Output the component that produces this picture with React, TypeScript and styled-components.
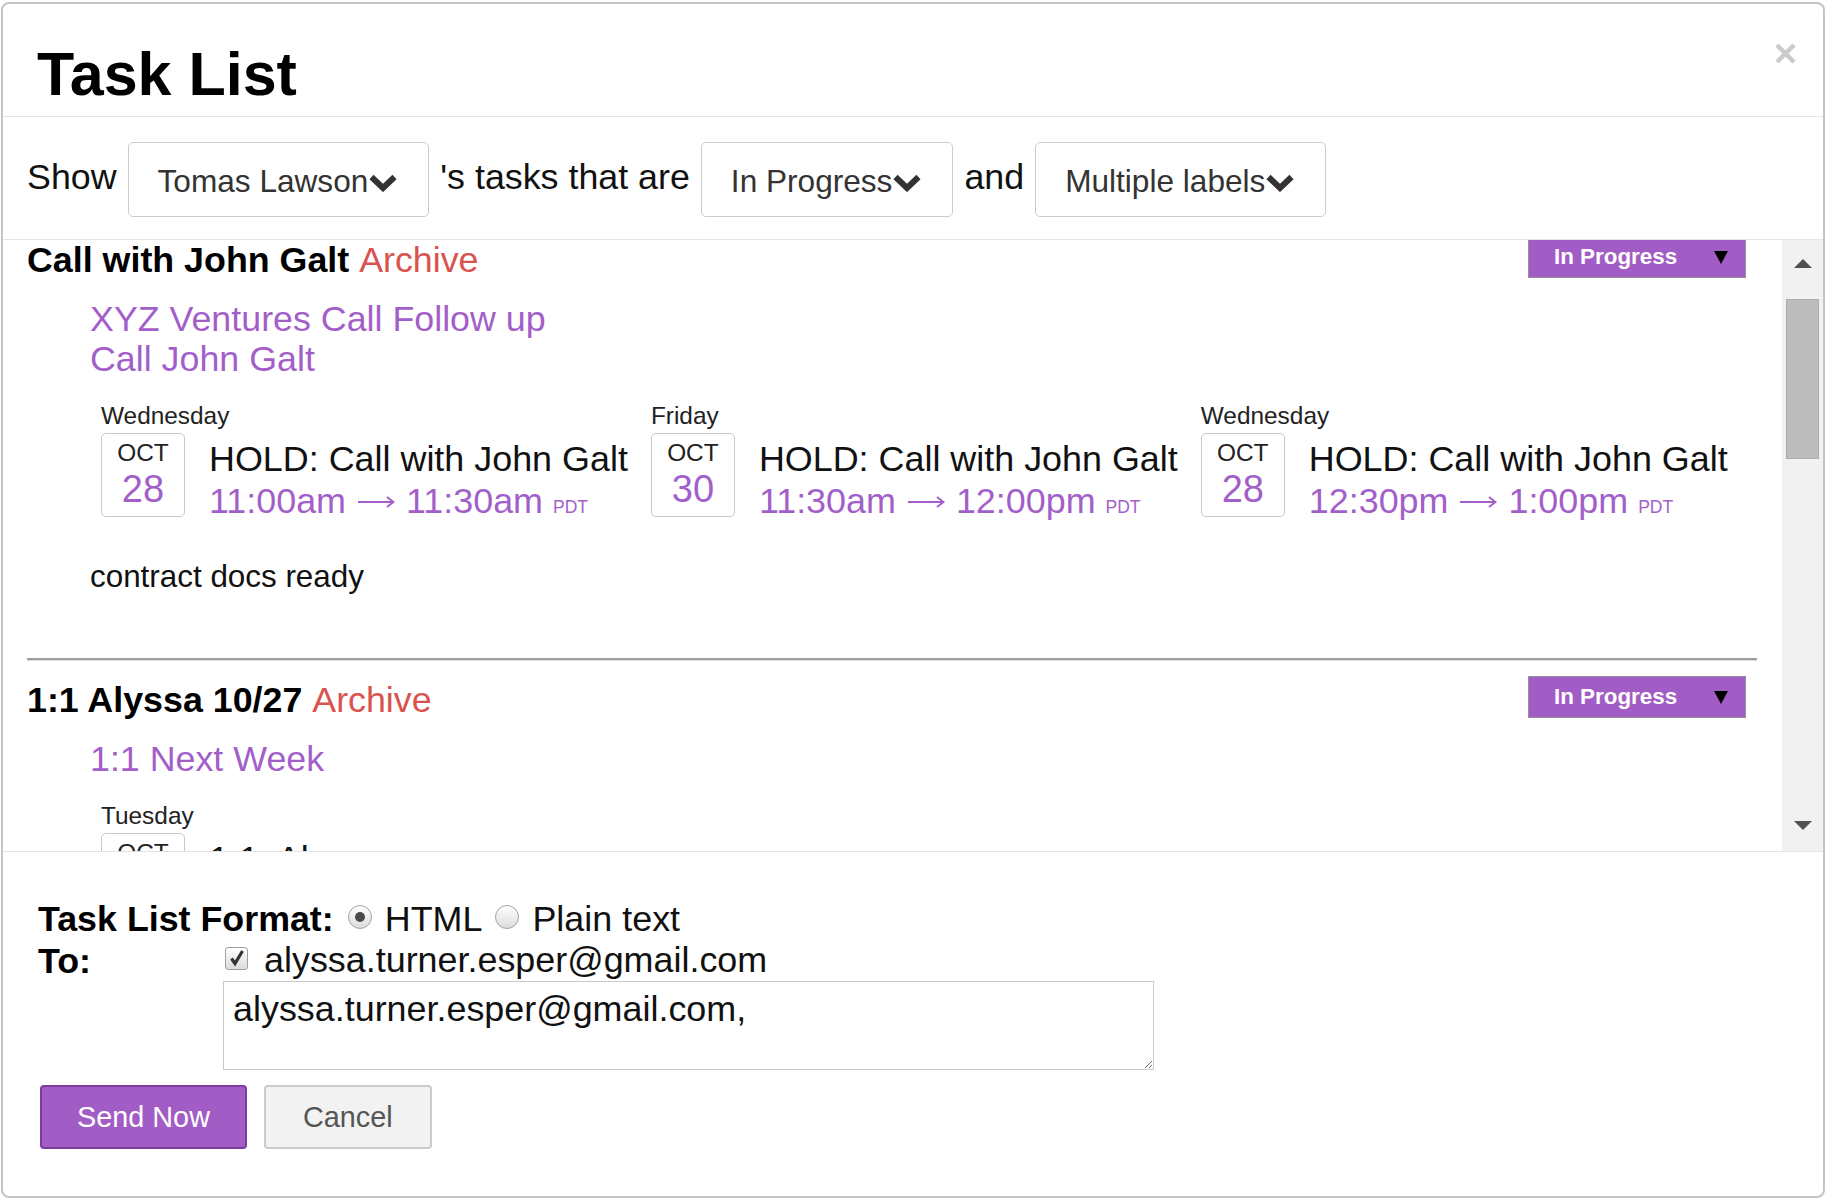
import React from "react";
import styled, { createGlobalStyle } from "styled-components";

const PURPLE = "#a35fc9";
const BADGE = "#a25cc5";

interface EventDto {
  day: string;
  month: string;
  date: string;
  title: string;
  start: string;
  end: string;
}

interface TaskDto {
  title: string;
  links: string[];
  events: EventDto[];
  notes?: string;
}

const tasks: TaskDto[] = [
  {
    title: "Call with John Galt",
    links: ["XYZ Ventures Call Follow up", "Call John Galt"],
    events: [
      { day: "Wednesday", month: "OCT", date: "28", title: "HOLD: Call with John Galt", start: "11:00am", end: "11:30am" },
      { day: "Friday", month: "OCT", date: "30", title: "HOLD: Call with John Galt", start: "11:30am", end: "12:00pm" },
      { day: "Wednesday", month: "OCT", date: "28", title: "HOLD: Call with John Galt", start: "12:30pm", end: "1:00pm" },
    ],
    notes: "contract docs ready",
  },
  {
    title: "1:1 Alyssa 10/27",
    links: ["1:1 Next Week"],
    events: [
      { day: "Tuesday", month: "OCT", date: "27", title: "1:1  Alyssa", start: "10:00am", end: "10:30am" },
    ],
  },
];

const GlobalStyle = createGlobalStyle`
  html, body {
    margin: 0;
    padding: 0;
    background: #fff;
  }
  body {
    font-family: "Liberation Sans", Arial, sans-serif;
    color: #111;
  }
`;

const Chevron = () => (
  <svg width="30" height="19" viewBox="0 0 30 19">
    <path d="M3.5 4 L15 15 L26.5 4" fill="none" stroke="#333" strokeWidth="6" />
  </svg>
);

const CloseIcon = () => (
  <svg width="21" height="21" viewBox="0 0 21 21">
    <path d="M2 2 L19 19 M19 2 L2 19" stroke="#cbcbcb" strokeWidth="4.5" />
  </svg>
);

const TriangleDown = ({ color = "#000", w = 14, h = 13 }: { color?: string; w?: number; h?: number }) => (
  <svg width={w} height={h} viewBox={`0 0 ${w} ${h}`}>
    <polygon points={`0,0 ${w},0 ${w / 2},${h}`} fill={color} />
  </svg>
);

const TriangleUp = ({ color = "#505050" }: { color?: string }) => (
  <svg width="18" height="9" viewBox="0 0 18 9">
    <polygon points="9,0 18,9 0,9" fill={color} />
  </svg>
);

const CheckMark = () => (
  <svg width="18" height="18" viewBox="0 0 18 18">
    <path d="M3.5 9.5 L7 14.5 L14.5 2" fill="none" stroke="#333" strokeWidth="3.2" />
  </svg>
);

const Arrow = () => (
  <ArrowSvg width="38" height="14" viewBox="0 0 38 14">
    <path d="M1 7 H36 M30 2 L36.5 7 L30 12" fill="none" stroke={PURPLE} strokeWidth="2" />
  </ArrowSvg>
);

const Select = ({ label }: { label: string }) => (
  <SelectBox>
    <span>{label}</span>
    <Chevron />
  </SelectBox>
);

const StatusBadge = () => (
  <Badge>
    <span>In Progress</span>
    <TriangleDown />
  </Badge>
);

const EventCard = ({ ev }: { ev: EventDto }) => (
  <Event>
    <DayLabel>{ev.day}</DayLabel>
    <EventBody>
      <DateBox>
        <Month>{ev.month}</Month>
        <DateNum>{ev.date}</DateNum>
      </DateBox>
      <EventInfo>
        <EventTitle>{ev.title}</EventTitle>
        <EventTime>
          {ev.start} <Arrow /> {ev.end} <Tz>PDT</Tz>
        </EventTime>
      </EventInfo>
    </EventBody>
  </Event>
);

const TaskItem = ({ task, first }: { task: TaskDto; first: boolean }) => (
  <Task>
    {!first && <Separator />}
    <TaskHeader>
      <TaskTitle>
        {task.title} <Archive>Archive</Archive>
      </TaskTitle>
      <StatusBadge />
    </TaskHeader>
    <Links>
      {task.links.map((l) => (
        <LinkLine key={l}>{l}</LinkLine>
      ))}
    </Links>
    <Events>
      {task.events.map((ev, i) => (
        <EventCard key={i} ev={ev} />
      ))}
    </Events>
    {task.notes && <Notes>{task.notes}</Notes>}
  </Task>
);

const App = () => {
  return (
    <>
      <GlobalStyle />
      <Dialog>
        <Header>
          <Title>Task List</Title>
          <CloseButton>
            <CloseIcon />
          </CloseButton>
        </Header>

        <FilterBar>
          <FilterText>Show</FilterText>
          <Select label="Tomas Lawson" />
          <FilterText>'s tasks that are</FilterText>
          <Select label="In Progress" />
          <FilterText>and</FilterText>
          <Select label="Multiple labels" />
        </FilterBar>

        <ListArea>
          <ListViewport>
            <ListInner>
              {tasks.map((t, i) => (
                <TaskItem key={t.title} task={t} first={i === 0} />
              ))}
            </ListInner>
          </ListViewport>
          <ScrollTrack>
            <ScrollButton>
              <TriangleUp />
            </ScrollButton>
            <ScrollThumb />
            <ScrollSpacer />
            <ScrollButton $bottom>
              <TriangleDown color="#505050" w={18} h={9} />
            </ScrollButton>
          </ScrollTrack>
        </ListArea>

        <Footer>
          <FormatRow>
            <FieldLabel>Task List Format:</FieldLabel>
            <Radio $checked />
            <OptionText>HTML</OptionText>
            <Radio />
            <OptionText>Plain text</OptionText>
          </FormatRow>
          <ToRow>
            <ToLabel>To:</ToLabel>
            <ToField>
              <CheckLine>
                <CheckBox>
                  <CheckMark />
                </CheckBox>
                <OptionText>alyssa.turner.esper@gmail.com</OptionText>
              </CheckLine>
              <Recipients readOnly defaultValue="alyssa.turner.esper@gmail.com," />
            </ToField>
          </ToRow>
          <Buttons>
            <Button $primary>Send Now</Button>
            <Button>Cancel</Button>
          </Buttons>
        </Footer>
      </Dialog>
    </>
  );
};

const Dialog = styled.div`
  box-sizing: border-box;
  margin: 2px 2px 0 1px;
  height: 1196px;
  border: 2px solid #c4c4c4;
  border-radius: 8px;
  background: #fff;
  display: flex;
  flex-direction: column;
  overflow: hidden;
`;

const Header = styled.div`
  display: flex;
  justify-content: space-between;
  align-items: flex-start;
  padding: 39px 27px 12px 34px;
  border-bottom: 1px solid #e5e5e5;
`;

const Title = styled.h1`
  margin: 1px 0 0;
  font-size: 61px;
  line-height: 60px;
  font-weight: bold;
  color: #000;
`;

const CloseButton = styled.div`
  width: 21px;
  height: 21px;
  display: flex;
`;

const FilterBar = styled.div`
  display: flex;
  align-items: center;
  gap: 11px;
  padding: 25px 24px 22px;
  border-bottom: 1px solid #e5e5e5;
`;

const FilterText = styled.span`
  font-size: 35.8px;
  color: #111;
  margin-top: -4px;
`;

const SelectBox = styled.div`
  box-sizing: border-box;
  height: 75px;
  display: flex;
  align-items: center;
  padding: 4px 30px 0 29px;
  border: 1.5px solid #cccccc;
  border-radius: 5px;
  font-size: 31.6px;
  color: #333;
  background: #fff;
  svg {
    margin-top: 1px;
  }
`;

const ListArea = styled.div`
  display: flex;
  height: 611px;
  border-bottom: 1px solid #e3e3e3;
`;

const ListViewport = styled.div`
  flex: 1;
  overflow: hidden;
  padding: 0 25px 0 24px;
`;

/* list is scrolled a few pixels down */
const ListInner = styled.div`
  margin-top: -4px;
`;

const ScrollTrack = styled.div`
  width: 41px;
  background: #f1f1f1;
  display: flex;
  flex-direction: column;
  align-items: center;
`;

const ScrollButton = styled.div<{ $bottom?: boolean }>`
  height: 46px;
  width: 100%;
  display: flex;
  align-items: center;
  justify-content: center;
  box-sizing: border-box;
  padding-bottom: ${(p) => (p.$bottom ? "6px" : "0")};
`;

const ScrollThumb = styled.div`
  box-sizing: border-box;
  margin-top: 13px;
  width: 33px;
  height: 160px;
  background: #bcbcbc;
  border: 1px solid #adadad;
`;

const ScrollSpacer = styled.div`
  flex: 1;
`;

const Task = styled.div`
  display: flex;
  flex-direction: column;
`;

const Separator = styled.div`
  margin-top: 63px;
  margin-bottom: 16px;
  border-top: 2px solid #9e9e9e;
  box-shadow: 0 1px 0 #dedede;
`;

const TaskHeader = styled.div`
  display: flex;
  justify-content: space-between;
  align-items: flex-start;
  height: 42px;
  padding-right: 11px;
`;

const TaskTitle = styled.div`
  font-size: 35.8px;
  line-height: 48px;
  font-weight: bold;
  color: #000;
`;

const Archive = styled.span`
  font-weight: normal;
  color: #d9534f;
`;

const Badge = styled.div`
  box-sizing: border-box;
  width: 218px;
  height: 42px;
  display: flex;
  align-items: center;
  justify-content: space-between;
  padding: 0 17px 0 25px;
  background: ${BADGE};
  border: 1px solid #9a8c9f;
  color: #fff;
  font-size: 22.4px;
  font-weight: bold;
`;

const Links = styled.div`
  margin-top: 21px;
  padding-left: 63px;
  display: flex;
  flex-direction: column;
`;

const LinkLine = styled.div`
  font-size: 35.8px;
  line-height: 40px;
  color: ${PURPLE};
`;

const Events = styled.div`
  display: flex;
  gap: 23px;
  margin-top: 23px;
  padding-left: 74px;
  white-space: pre;
`;

const Event = styled.div`
  display: flex;
  flex-direction: column;
`;

const DayLabel = styled.div`
  font-size: 24.4px;
  line-height: 28px;
  color: #222;
`;

const EventBody = styled.div`
  display: flex;
  align-items: flex-start;
  gap: 24px;
  margin-top: 3px;
`;

const DateBox = styled.div`
  box-sizing: border-box;
  width: 84px;
  height: 84px;
  border: 1.5px solid #c8c8c8;
  border-radius: 5px;
  padding-top: 5px;
  display: flex;
  flex-direction: column;
  align-items: center;
`;

const Month = styled.div`
  font-size: 24.4px;
  line-height: 28px;
  color: #222;
`;

const DateNum = styled.div`
  font-size: 38px;
  line-height: 44px;
  color: ${PURPLE};
`;

const EventInfo = styled.div`
  padding-top: 5px;
  display: flex;
  flex-direction: column;
`;

const EventTitle = styled.div`
  font-size: 35.9px;
  line-height: 42px;
  color: #111;
`;

const EventTime = styled.div`
  font-size: 35.9px;
  line-height: 42px;
  color: ${PURPLE};
`;

const ArrowSvg = styled.svg`
  display: inline-block;
  vertical-align: 4px;
  margin: 0 1px;
`;

const Tz = styled.span`
  font-size: 17.5px;
`;

const Notes = styled.div`
  margin-top: 31px;
  padding-left: 63px;
  font-size: 31.4px;
  line-height: 36px;
  color: #111;
`;

const Footer = styled.div`
  padding: 46px 24px 0 35px;
  display: flex;
  flex-direction: column;
`;

const FormatRow = styled.div`
  display: flex;
  align-items: center;
  height: 42px;
`;

const FieldLabel = styled.span`
  font-size: 35.8px;
  font-weight: bold;
  color: #000;
  margin-right: 14px;
`;

const OptionText = styled.span`
  font-size: 35.9px;
  color: #111;
  margin-right: 13px;
`;

const Radio = styled.span<{ $checked?: boolean }>`
  box-sizing: border-box;
  width: 24px;
  height: 24px;
  margin-right: 13px;
  margin-top: -4px;
  border-radius: 50%;
  border: 1.5px solid #a0a0a0;
  background: linear-gradient(#ffffff, #dcdcdc);
  display: flex;
  align-items: center;
  justify-content: center;
  &::after {
    content: "";
    display: ${(p) => (p.$checked ? "block" : "none")};
    width: 10px;
    height: 10px;
    border-radius: 50%;
    background: #4a4a4a;
  }
`;

const ToRow = styled.div`
  display: flex;
`;

const ToLabel = styled.div`
  width: 187px;
  flex-shrink: 0;
  font-size: 35.8px;
  line-height: 42px;
  font-weight: bold;
  color: #000;
`;

const ToField = styled.div`
  display: flex;
  flex-direction: column;
`;

const CheckLine = styled.div`
  display: flex;
  align-items: center;
  height: 40px;
`;

const CheckBox = styled.span`
  box-sizing: border-box;
  width: 23px;
  height: 23px;
  margin-right: 16px;
  margin-top: -4px;
  border: 1.5px solid #a0a0a0;
  border-radius: 3px;
  background: linear-gradient(#ffffff, #dcdcdc);
  display: flex;
  align-items: center;
  justify-content: center;
`;

const Recipients = styled.textarea`
  box-sizing: border-box;
  margin: 1px 0 0 -2px;
  width: 931px;
  height: 89px;
  padding: 6px 9px;
  border: 1.5px solid #c9c9c9;
  font-family: "Liberation Sans", Arial, sans-serif;
  font-size: 35.9px;
  line-height: 42px;
  color: #111;
  outline: none;
`;

const Buttons = styled.div`
  display: flex;
  gap: 17px;
  margin-top: 15px;
  padding-left: 2px;
`;

const Button = styled.button<{ $primary?: boolean }>`
  box-sizing: border-box;
  height: 64px;
  padding: 0 ${(p) => (p.$primary ? "35px" : "37px")};
  min-width: ${(p) => (p.$primary ? "207px" : "166px")};
  border-radius: 4px;
  border: 2px solid ${(p) => (p.$primary ? "#7c3d9f" : "#cccccc")};
  background: ${(p) => (p.$primary ? BADGE : "#f2f2f2")};
  color: ${(p) => (p.$primary ? "#fff" : "#555")};
  font-family: "Liberation Sans", Arial, sans-serif;
  font-size: 28.8px;
  cursor: pointer;
`;

export default App;
